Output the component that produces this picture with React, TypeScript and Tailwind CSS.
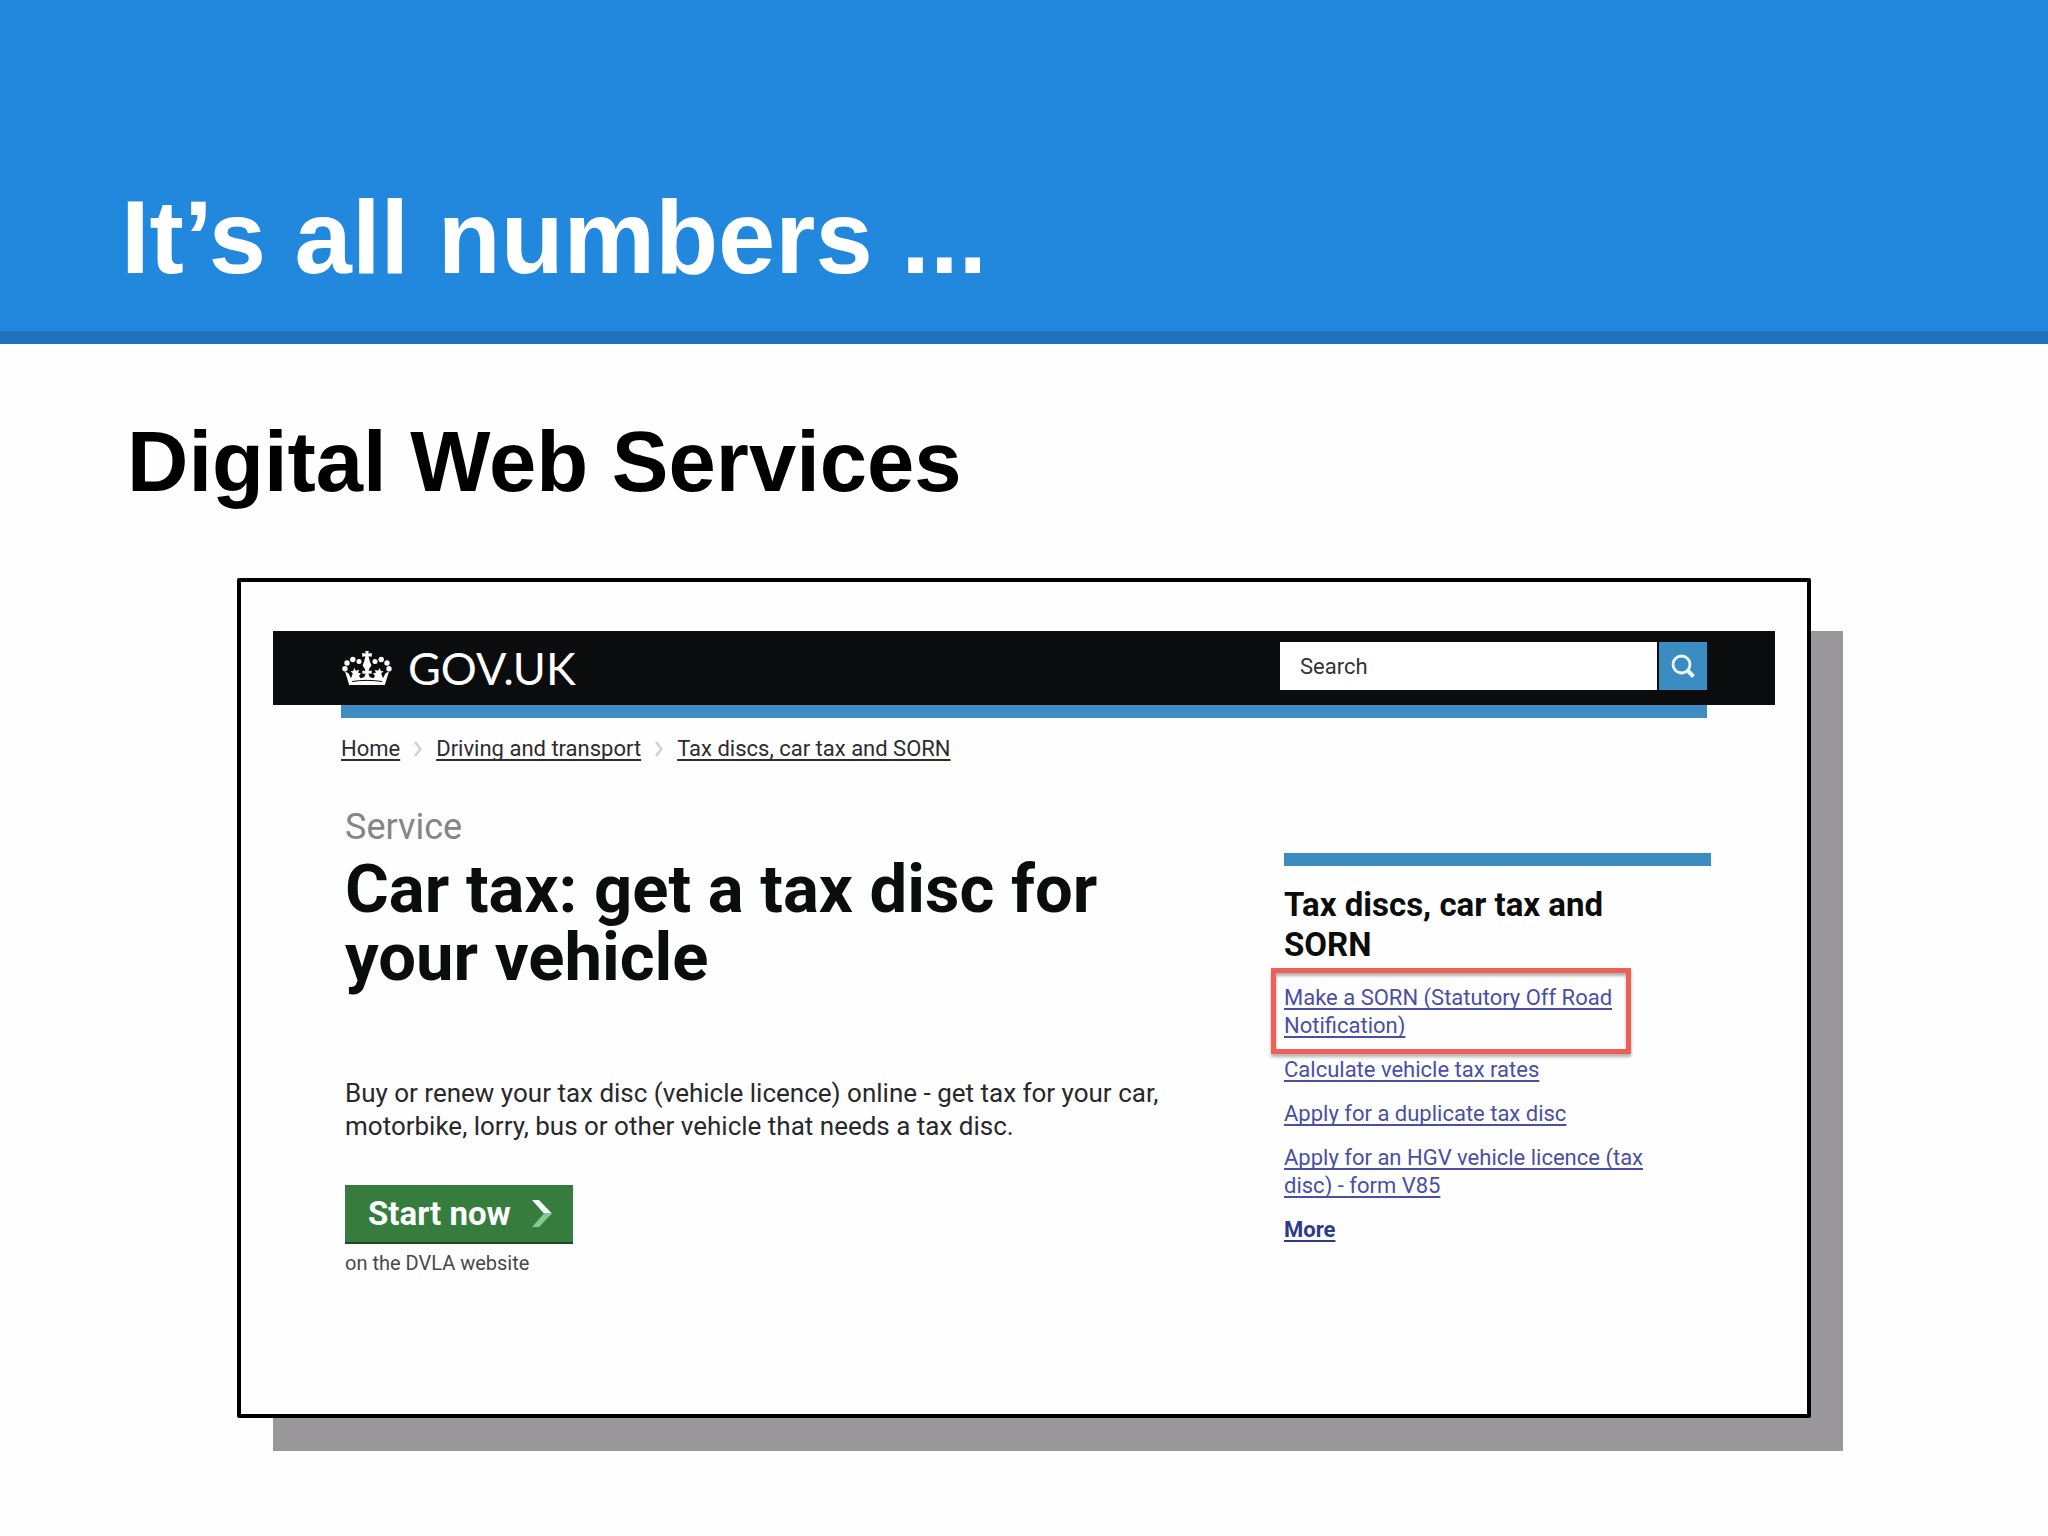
import React from "react";

const crumbs = ["Home", "Driving and transport", "Tax discs, car tax and SORN"];

function Crown() {
  return (
    <svg viewBox="0 0 50 36" className="h-9 w-[50px] shrink-0" fill="#fff" aria-hidden="true">
      {/* top cross and centre stem */}
      <path d="M23.2 1h3.600l-.6 2.600 3.600-.6v3.800l-3.200-.5 1 4.200 1.800 5-2 3h-4.800l-2-3 1.800-5 1-4.200-3.200.5V3l3.600.6z" />
      {/* pearls */}
      <circle cx="17" cy="11.500" r="2.500" />
      <circle cx="33" cy="11.500" r="2.500" />
      <circle cx="10.800" cy="9.500" r="2.700" />
      <circle cx="39.200" cy="9.500" r="2.700" />
      <circle cx="5" cy="13" r="2.700" />
      <circle cx="45" cy="13" r="2.700" />
      <circle cx="3" cy="18.800" r="2.700" />
      <circle cx="47" cy="18.800" r="2.700" />
      {/* arches and band */}
      <path d="M3 21.500l3.500 1.700 2.500 5 1.800-4.700-2.300-2.200 2.800-.3.800-3 1.900 2.700 3-1-.8 3.400 2.800.2-2 2.600 1.600 2.300 3.800-1.200 1.200-3.600-3.200.3v-3.200l2.900.5-.6-3h4.600l-.6 3 2.900-.5v3.200l-3.200-.3 1.200 3.600 3.800 1.200 1.600-2.300-2-2.600 2.800-.2-.8-3.400 3 1 1.900-2.700.8 3 2.800.3-2.300 2.200 1.800 4.700 2.500-5 3.500-1.700-4.200 13.500H7.200z" />
      <path d="M10 31.500c9-1.500 21-1.500 30 0" fill="none" stroke="#0b0c0c" strokeWidth="1" />
    </svg>
  );
}

function Header() {
  return (
    <header>
      <div className="flex h-[74px] items-center justify-between bg-[#0b0c0e] pr-[68px] pl-[69px]">
        <a href="#home" className="flex items-center gap-4 text-white">
          <Crown />
          <span className="font-[Lato,sans-serif] text-[45px] leading-[54px]">GOV.UK</span>
        </a>
        <form className="mb-1 flex gap-0.5" onSubmit={(e) => e.preventDefault()}>
          <input
            type="text"
            aria-label="Search"
            defaultValue="Search"
            className="h-12 w-[377px] bg-white px-5 text-[22px] text-[#333]"
          />
          <button type="submit" aria-label="Search GOV.UK" className="flex h-12 w-12 items-center justify-center bg-[#3a8cc1]">
            <svg viewBox="0 0 24 24" className="size-6" fill="none" stroke="#eef8ff" aria-hidden="true">
              <circle cx="10.500" cy="10.500" r="8.500" strokeWidth="2.800" />
              <path d="M16.500 16.500l6 6" strokeWidth="4" />
            </svg>
          </button>
        </form>
      </div>
      <div className="mx-[68px] h-[13px] bg-[#3e8cc4]" />
    </header>
  );
}

function Breadcrumbs() {
  return (
    <nav aria-label="Breadcrumb" className="mt-[17px] pl-[68px]">
      <ol className="flex text-[22px] leading-7 text-[#2c2c2e]">
        {crumbs.map((c, i) => (
          <li key={c} className="flex items-center">
            {i > 0 && (
              <svg viewBox="0 0 8 16" className="mx-3.5 h-4 w-2" fill="none" stroke="#d0d0d3" strokeWidth="2.500" aria-hidden="true">
                <path d="M1 1l5.500 7L1 15" />
              </svg>
            )}
            <a href="#crumb" className="underline decoration-2 underline-offset-3 [text-decoration-skip-ink:none]">{c}</a>
          </li>
        ))}
      </ol>
    </nav>
  );
}

const link = "underline decoration-2 underline-offset-3 [text-decoration-skip-ink:none]";

function Sidebar() {
  return (
    <aside className="mt-[46px] border-t-[13px] border-[#3a8cc1] pt-[19px]">
      <h2 className="max-w-[350px] text-[33px] leading-10 font-bold text-[#0b0c0c]">Tax discs, car tax and SORN</h2>
      <ul className="mt-[19px] flex max-w-[370px] flex-col gap-4 text-[22px] leading-7 text-[#4a4fa3]">
        <li className="relative">
          <a href="#sorn" className={link}>Make a SORN (Statutory Off Road Notification)</a>
          <span className="pointer-events-none absolute -top-4 -bottom-[14px] -left-[13px] w-[360px] border-5 border-[#f05f55] shadow-[0_3px_3px_rgba(0,0,0,0.3),inset_0_3px_3px_rgba(0,0,0,0.3)]" />
        </li>
        <li><a href="#rates" className={link}>Calculate vehicle tax rates</a></li>
        <li><a href="#duplicate" className={link}>Apply for a duplicate tax disc</a></li>
        <li><a href="#v85" className={link}>Apply for an HGV vehicle licence (tax disc) - form V85</a></li>
        <li><a href="#more" className="font-bold text-[#2e3a8c] underline decoration-2 underline-offset-3">More</a></li>
      </ul>
    </aside>
  );
}

function Service() {
  return (
    <section>
      <p className="text-4xl leading-10 text-[#858588]">Service</p>
      <h1 className="mt-2 max-w-[850px] text-[67px] leading-[68px] font-bold text-[#0b0c0c]">
        Car tax: get a tax disc for your vehicle
      </h1>
      <p className="mt-[86px] max-w-[850px] text-[26px] leading-[33px] text-[#28282a]">
        Buy or renew your tax disc (vehicle licence) online - get tax for your car, motorbike, lorry, bus or other
        vehicle that needs a tax disc.
      </p>
      <button type="button" className="mt-[42px] flex h-[59px] items-center gap-5 border-b-2 border-[#1f4726] bg-[#357c3d] pr-5 pl-[23px] text-[33px] leading-10 font-bold text-white">
        Start now
        <svg viewBox="0 0 22 27" className="h-[27px] w-[22px]" aria-hidden="true">
          <path d="M1 0h7l13 13.500h-8z" fill="#f4fff6" />
          <path d="M13 13.500h8L8 27H1z" fill="#86c796" />
        </svg>
      </button>
      <p className="mt-[7px] text-xl leading-6 text-[#48484b]">on the DVLA website</p>
    </section>
  );
}

export default function App() {
  return (
    <main className="min-h-screen bg-[#fefefe] pb-[116px]">
      <header className="border-b-[13px] border-[#1f72bb] bg-[#2288dd] px-[121px] pt-[178px] pb-[33px]">
        <h1 className="font-['Liberation_Sans',Arial,sans-serif] text-[103px] leading-[120px] font-bold text-white">It’s all numbers ...</h1>
      </header>
      <h2 className="mt-[68px] px-[127px] font-['Liberation_Sans',Arial,sans-serif] text-[85px] leading-[100px] font-bold text-black">
        Digital Web Services
      </h2>
      <div className="relative mx-[237px] mt-[66px]">
        <div className="absolute top-[53px] -right-8 -bottom-[33px] left-9 bg-[#9a989a]" />
        <div className="relative rounded-[2px] border-4 border-black bg-[#fefefe] pt-[49px] pb-[139px] font-[Roboto,sans-serif]">
          <div className="mx-8">
            <Header />
            <Breadcrumbs />
          </div>
          <div className="mt-11 grid grid-cols-[1fr_427px] gap-12 pr-24 pl-[104px]">
            <Service />
            <Sidebar />
          </div>
        </div>
      </div>
    </main>
  );
}
